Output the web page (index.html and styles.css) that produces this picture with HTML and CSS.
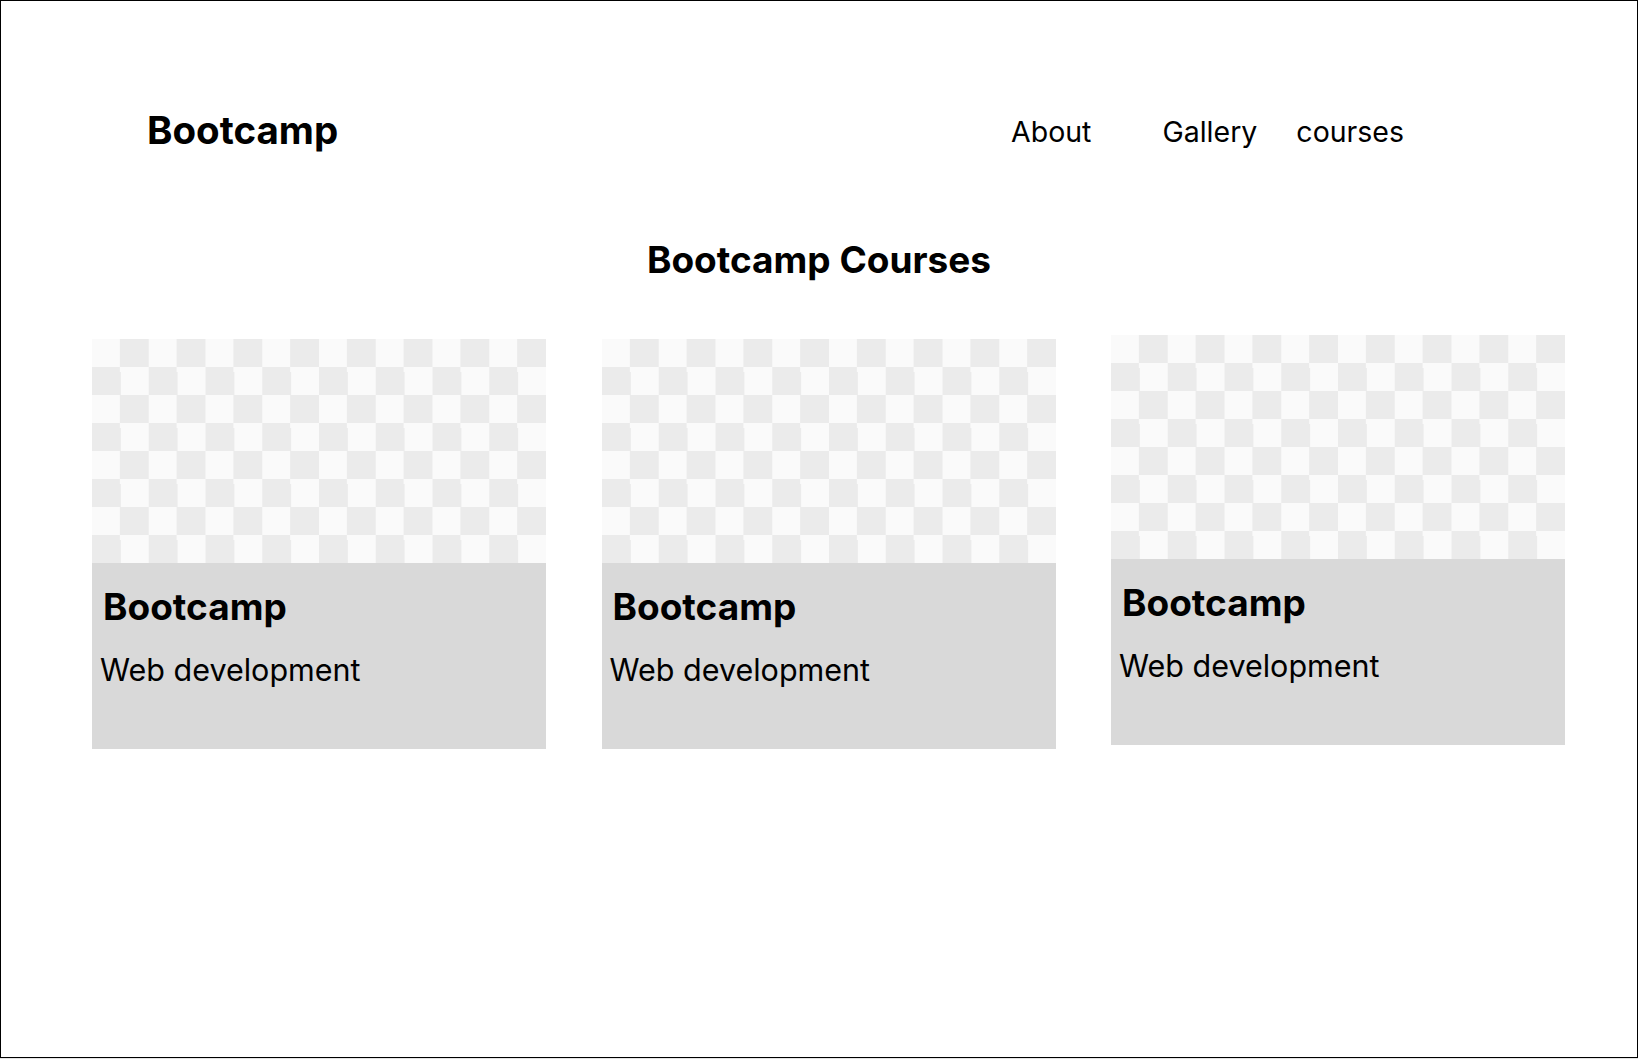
FILE: index.html
```html
<!DOCTYPE html>
<html lang="en">
<head>
<meta charset="utf-8">
<title>Bootcamp</title>
<link rel="stylesheet" href="styles.css">
</head>
<body>
<div class="frame">
  <header class="header">
    <div class="logo">Bootcamp</div>
    <nav class="nav">
      <a class="nav-link nav-link--wide" href="#">About</a>
      <a class="nav-link" href="#">Gallery</a>
      <a class="nav-link" href="#">courses</a>
    </nav>
  </header>
  <h1 class="heading">Bootcamp Courses</h1>
  <section class="cards">
    <article class="card card--low">
      <div class="card-image"></div>
      <div class="card-body">
        <h2 class="card-title">Bootcamp</h2>
        <p class="card-text">Web development</p>
      </div>
    </article>
    <article class="card card--low">
      <div class="card-image"></div>
      <div class="card-body">
        <h2 class="card-title">Bootcamp</h2>
        <p class="card-text">Web development</p>
      </div>
    </article>
    <article class="card">
      <div class="card-image"></div>
      <div class="card-body">
        <h2 class="card-title">Bootcamp</h2>
        <p class="card-text">Web development</p>
      </div>
    </article>
  </section>
</div>
</body>
</html>
```

FILE: styles.css
```css
html {
  background: #e4e4e4;
}
body {
  margin: 0;
  font-family: Inter, "Noto Sans", sans-serif;
  color: #000;
}
.frame {
  box-sizing: border-box;
  height: 1058px;
  border: 1px solid #000;
  background: #fff;
}
.header {
  display: flex;
  align-items: flex-start;
  justify-content: space-between;
  padding: 105px 233px 0 146px;
}
.logo {
  font-size: 38.5px;
  font-weight: 700;
  line-height: 48px;
}
.nav {
  display: flex;
  gap: 39px;
  margin-top: 8px;
}
.nav-link {
  font-size: 28.5px;
  line-height: 35px;
  color: #000;
  text-decoration: none;
}
.nav-link--wide {
  margin-right: 32px;
}
.heading {
  margin: 83px 0 0;
  text-align: center;
  font-size: 37px;
  font-weight: 700;
  line-height: 45px;
}
.cards {
  display: flex;
  align-items: flex-start;
  gap: 55.5px;
  padding: 53px 0 0 91px;
}
.card {
  width: 454px;
  flex: none;
}
.card--low {
  margin-top: 4px;
}
.card-image {
  height: 224px;
  background: repeating-conic-gradient(#ebebeb 0 25%, #fafafa 0 50%);
  background-size: 56.75px 56px;
}
.card-body {
  box-sizing: border-box;
  height: 186px;
  background: #d9d9d9;
  padding: 21px 8px 0;
}
.card-title {
  margin: 0 0 0 3px;
  font-size: 37px;
  font-weight: 700;
  line-height: 45px;
}
.card-text {
  margin: 22px 0 0;
  font-size: 30.5px;
  line-height: 37px;
}
```
